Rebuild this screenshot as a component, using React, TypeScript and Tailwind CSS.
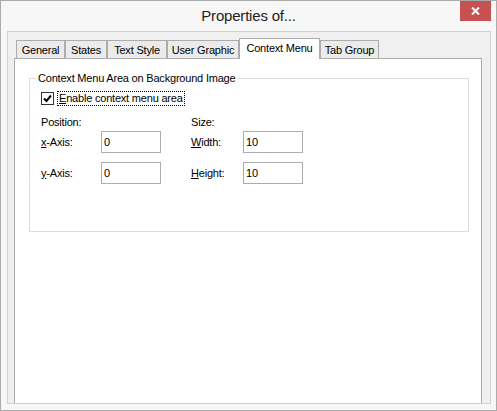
import type { ReactNode } from "react";

const TABS = [
  { label: "General", width: "w-[49px]" },
  { label: "States", width: "w-[42px]" },
  { label: "Text Style", width: "w-[60px]" },
  { label: "User Graphic", width: "w-[72px]" },
  { label: "Context Menu", width: "w-[81px]", active: true },
  { label: "Tab Group", width: "w-[59px]" },
];

function TitleBar() {
  return (
    <div className="relative flex h-[30px] shrink-0 items-center justify-center">
      <span className="text-[15px] tracking-[-0.2px] text-[#222]">Properties of...</span>
      {/* close button sits over the title bar's right end */}
      <button
        type="button"
        aria-label="Close"
        className="absolute right-[5px] top-0 flex h-[20px] w-[31px] items-center justify-center bg-[#c75050]"
      >
        <svg width="9" height="8" viewBox="0 0 9 8" aria-hidden>
          <path d="M1 0.5 L8 7.5 M8 0.5 L1 7.5" stroke="#fff" strokeWidth="2" />
        </svg>
      </button>
    </div>
  );
}

function TabStrip() {
  return (
    <div className="ml-[2px] flex h-[20px] items-end">
      {TABS.map((tab) =>
        tab.active ? (
          <div
            key={tab.label}
            className={`relative z-10 -mb-px flex h-[21px] ${tab.width} justify-center border border-b-0 border-[#acacac] bg-white pt-[2px] leading-[14px]`}
          >
            {tab.label}
          </div>
        ) : (
          <div
            key={tab.label}
            className={`flex h-[18px] ${tab.width} justify-center border border-b-0 border-[#acacac] bg-[#ebebeb] pt-[2px] leading-[14px]`}
          >
            {tab.label}
          </div>
        ),
      )}
    </div>
  );
}

function Field({ label, value }: { label: ReactNode; value: string }) {
  return (
    <>
      <span className="w-[60px]">{label}</span>
      <input
        readOnly
        value={value}
        className="h-[22px] w-[60px] border border-[#abadb3] bg-white pl-[2px] outline-none"
      />
    </>
  );
}

function Checkbox() {
  return (
    <span className="flex size-[13px] items-center justify-center border border-[#333] bg-white">
      <svg width="9" height="9" viewBox="0 0 9 9" aria-hidden>
        <path d="M1 4.5 L3.5 7 L8 1.5" fill="none" stroke="#000" strokeWidth="2" />
      </svg>
    </span>
  );
}

export default function App() {
  return (
    <div className="flex h-[411px] w-[497px] flex-col border border-[#ababab] bg-[#f7f7f7] font-['Liberation_Sans',Arial,sans-serif] text-[11px] tracking-[-0.2px] text-black">
      <TitleBar />
      <div className="mb-[6px] ml-[6px] mr-[5px] flex flex-1 flex-col border border-[#d0d0d0] bg-[#f0f0f0] pl-[6px] pr-[8px] pt-[6px]">
        <TabStrip />
        <div className="flex-1 border border-b-0 border-[#acacac] bg-white">
          <fieldset className="ml-[14px] mr-[12px] mt-[13px] h-[160px] border border-[#dcdcdc] pl-[6px]">
            <legend className="px-[2px] leading-[13px]">Context Menu Area on Background Image</legend>
            <div className="ml-[5px] flex flex-col">
              <div className="mt-[6px] flex h-[15px] items-center">
                <Checkbox />
                <span className="ml-[3px] border border-dotted border-black px-px leading-[13px]">
                  <u className="underline-offset-1">E</u>nable context menu area
                </span>
              </div>
              <div className="mt-[10px] flex leading-[13px]">
                <span className="w-[150px]">Position:</span>
                <span>Size:</span>
              </div>
              <div className="mt-[2px] flex h-[22px] items-center">
                <Field label={<><u className="underline-offset-1">x</u>-Axis:</>} value="0" />
                <span className="w-[30px]" />
                <span className="w-[52px]">
                  <u className="underline-offset-1">W</u>idth:
                </span>
                <input
                  readOnly
                  value="10"
                  className="h-[22px] w-[60px] border border-[#abadb3] bg-white pl-[2px] outline-none"
                />
              </div>
              <div className="mt-[9px] flex h-[22px] items-center">
                <Field label={<><u className="underline-offset-1">y</u>-Axis:</>} value="0" />
                <span className="w-[30px]" />
                <span className="w-[52px]">
                  <u className="underline-offset-1">H</u>eight:
                </span>
                <input
                  readOnly
                  value="10"
                  className="h-[22px] w-[60px] border border-[#abadb3] bg-white pl-[2px] outline-none"
                />
              </div>
            </div>
          </fieldset>
        </div>
      </div>
    </div>
  );
}
